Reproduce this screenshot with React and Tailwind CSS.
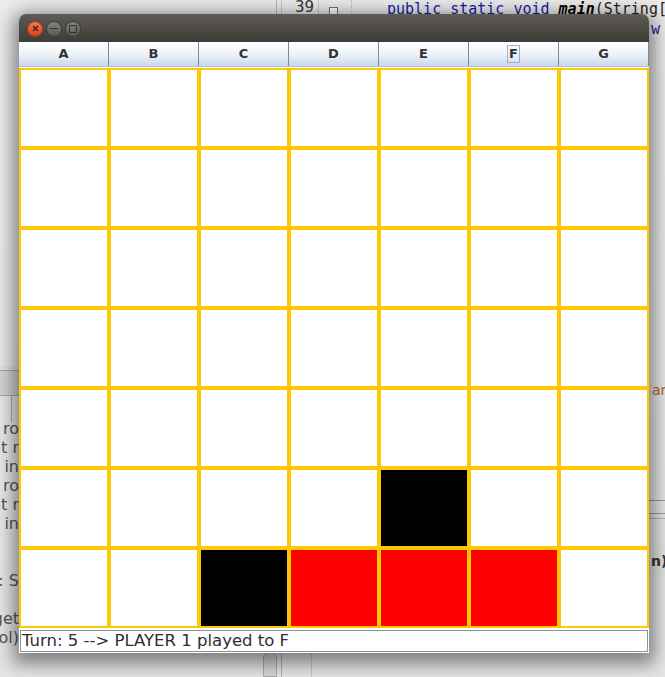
import React from "react";

const cols = ["A", "B", "C", "D", "E", "F", "G"];

// 0 empty, 1 black, 2 red
const board = [
  [0, 0, 0, 0, 0, 0, 0],
  [0, 0, 0, 0, 0, 0, 0],
  [0, 0, 0, 0, 0, 0, 0],
  [0, 0, 0, 0, 0, 0, 0],
  [0, 0, 0, 0, 0, 0, 0],
  [0, 0, 0, 0, 1, 0, 0],
  [0, 0, 1, 2, 2, 2, 0],
];

const cellColor = ["bg-white", "bg-black", "bg-[#ff0000]"];

const leftLines = ["t ro", "nt r", "v, in", "t ro", "nt r", ", in", "", "", ") : S", "", "get", "ol)"];

const IdeBackground = () => (
  <>
    {/* top editor strip */}
    <div className="absolute left-[276px] top-0 flex h-[14px] items-start">
      <div className="h-full w-px bg-[#b8b8b8]" />
      <div className="ml-[4px] flex h-full w-[38px] justify-end border-x border-[#c8c8c8] bg-[#ececec] pr-[4px] text-[15px] leading-none text-[#333]">
        39
      </div>
      <div className="ml-[10px] mt-[7px] h-[9px] w-[9px] border border-[#777] bg-white" />
      <div className="ml-[13px] h-full border-l border-dotted border-[#bbb]" />
      <div className="ml-[35px] mt-[2px] whitespace-nowrap font-['DejaVu_Sans_Mono'] text-[15px] leading-none text-[#1a1aa6]">
        public static void <span className="font-bold italic text-black">main</span>
        <span className="text-[#222]">(String[</span>
      </div>
    </div>
    <div className="absolute left-[651px] top-[22px] font-['DejaVu_Sans_Mono'] text-[15px] leading-none text-[#1a1aa6]">
      w
    </div>

    {/* left panel */}
    <div className="absolute left-0 top-[366px] flex w-[20px] flex-col">
      <div className="h-[4px] bg-[#e2e2e2]" />
      <div className="h-[26px] border-y border-[#a9a9a9] bg-[#d4d4d4]" />
      <div className="ml-[11px] h-[26px] w-px bg-[#aaa]" />
    </div>
    <div className="absolute right-[646px] top-[419px] flex flex-col items-end text-[16px] leading-[19px] text-[#555]">
      {leftLines.map((t, i) => (
        <div key={i} className="h-[19px] whitespace-nowrap">
          {t}
        </div>
      ))}
    </div>

    {/* right panel */}
    <div className="absolute left-[649px] top-[383px] flex w-[16px] flex-col">
      <div className="pl-[3px] text-[14px] leading-none text-[#b8651a]">am</div>
      <div className="mt-[103px] h-px bg-[#9a9a9a]" />
      <div className="mt-[12px] h-px bg-[#9a9a9a]" />
      <div className="mt-[4px] h-px bg-[#b5b5b5]" />
      <div className="mt-[26px] flex h-[32px] items-center bg-[#e4e4e4] pl-[2px] text-[14px] font-bold text-[#333]">
        n)
      </div>
    </div>

    {/* bottom scroll pieces */}
    <div className="absolute left-[263px] top-[652px] flex h-[25px]">
      <div className="w-[14px] rounded-t-[6px] border border-[#a6a6a6] bg-[#d6d6d6]" />
      <div className="ml-[4px] w-px bg-[#b0b0b0]" />
      <div className="ml-[29px] w-px bg-[#c4c4c4]" />
    </div>
  </>
);

const WinButton = ({ kind }) => {
  const close = kind === "close";
  return (
    <div
      className={
        "flex h-[16px] w-[16px] items-center justify-center rounded-full border " +
        (close
          ? "border-[#a9381b] bg-gradient-to-b from-[#f5774c] to-[#d5441f]"
          : "border-[#3a3935] bg-gradient-to-b from-[#85837e] to-[#5b5a55]")
      }
    >
      {kind === "close" && (
        <svg width="7" height="7" viewBox="0 0 7 7">
          <path d="M1 1L6 6M6 1L1 6" stroke="#3b1a10" strokeWidth="1.2" />
        </svg>
      )}
      {kind === "min" && <div className="h-[1.5px] w-[8px] bg-[#33322e]" />}
      {kind === "max" && <div className="h-[8px] w-[8px] border border-[#33322e]" />}
    </div>
  );
};

export default function App() {
  return (
    <div className="relative h-[677px] w-[665px] overflow-hidden bg-gradient-to-b from-[#ececec] to-[#e6e6e6] font-['DejaVu_Sans',sans-serif]">
      <IdeBackground />

      {/* game window */}
      <div className="absolute left-[19px] top-[14px] w-[630px] rounded-t-[7px] bg-white shadow-[0_5px_18px_6px_rgba(0,0,0,0.45)]">
        <div className="flex h-[28px] items-center gap-[3px] rounded-t-[7px] bg-gradient-to-b from-[#5f5c55] to-[#3d3c38] pl-[8px] pt-[1px]">
          <WinButton kind="close" />
          <WinButton kind="min" />
          <WinButton kind="max" />
        </div>

        <div className="grid h-[25px] grid-cols-7 border-b border-[#b3c2d1]">
          {cols.map((c) => (
            <div
              key={c}
              className="flex items-center justify-center border-r border-[#7c8b99] bg-gradient-to-b from-[#ffffff] via-[#eef3f9] to-[#c9d8e8] text-[13px] font-bold text-[#333]"
            >
              {c === "F" ? (
                <span className="border border-[#9fb1c3] px-[1px] leading-[16px]">F</span>
              ) : (
                c
              )}
            </div>
          ))}
        </div>

        <div className="mt-px grid grid-cols-7">
          {board.flat().map((v, i) => (
            <div key={i} className={"h-[80px] border-2 border-[#ffc800] " + cellColor[v]} />
          ))}
        </div>

        <div className="px-px pb-px pt-[2px]">
          <div className="h-[22px] whitespace-nowrap border border-[#8896a4] bg-white pl-[1px] text-[16.5px] leading-[20px] text-[#2e2e2e]">
            Turn: 5 --&gt; PLAYER 1 played to F
          </div>
        </div>
      </div>
    </div>
  );
}
